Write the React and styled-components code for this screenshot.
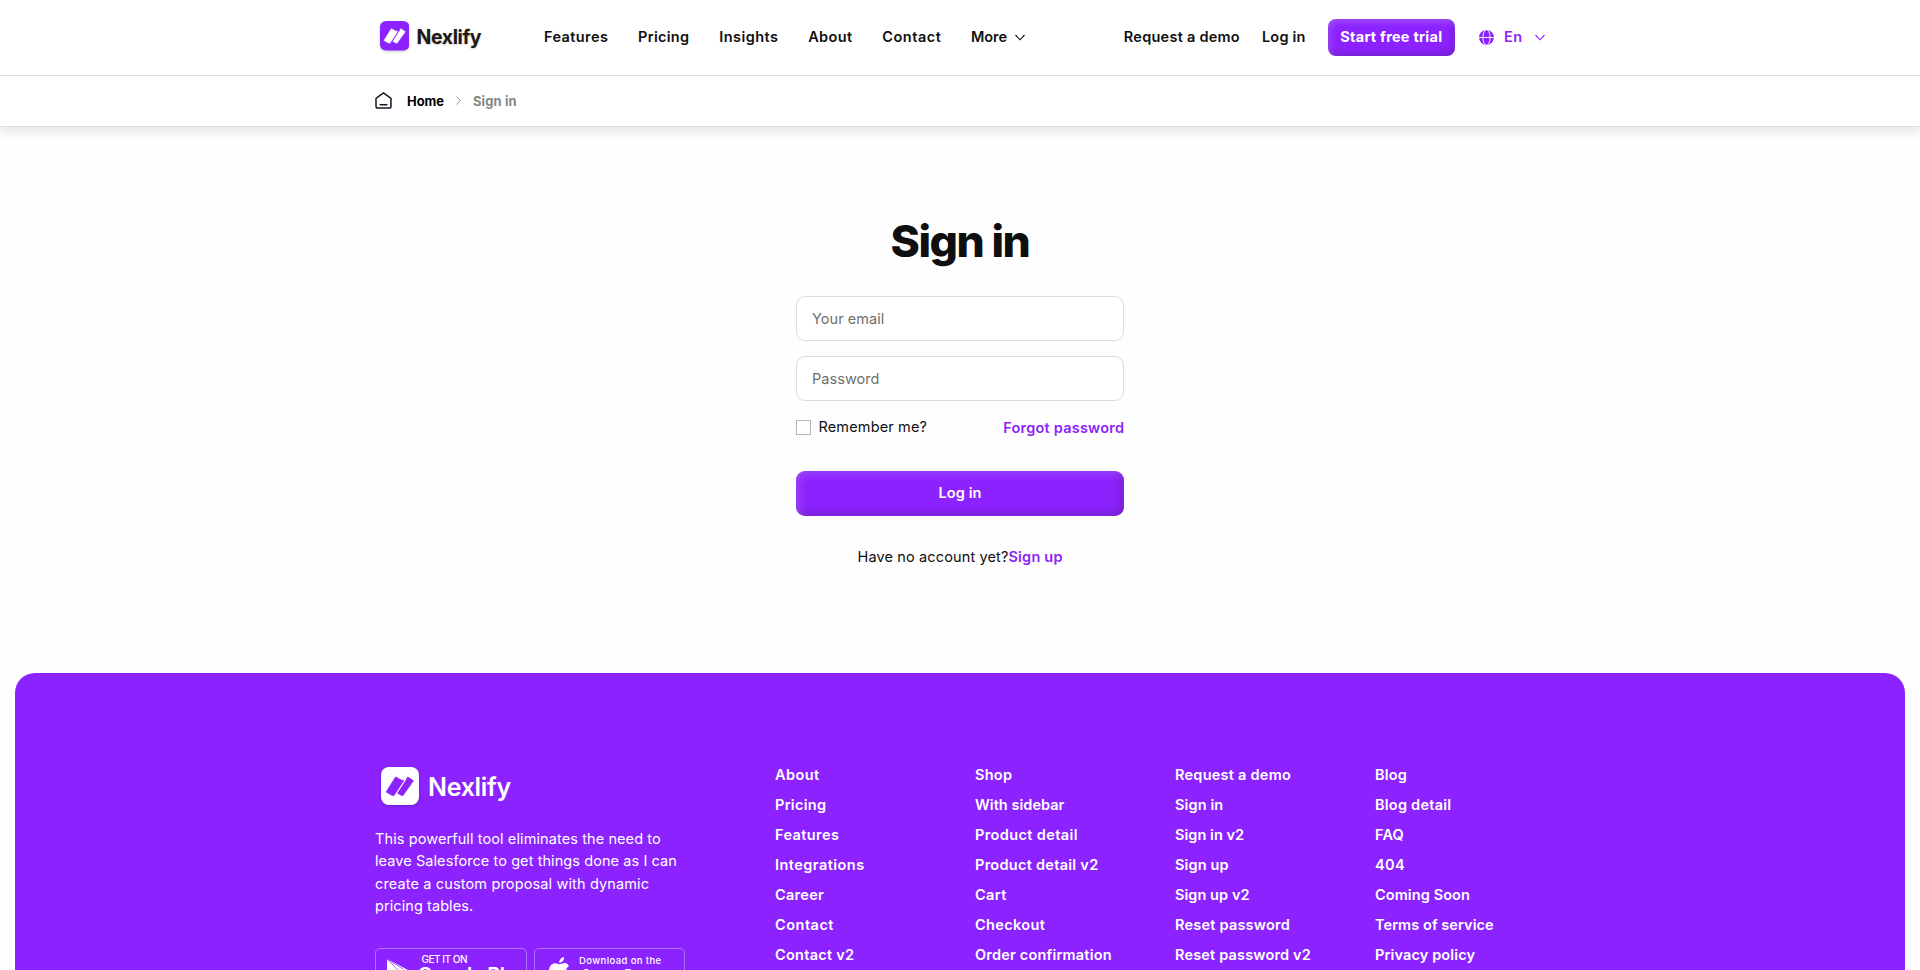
import React from 'react';
import styled, { createGlobalStyle } from 'styled-components';

const PURPLE = '#8c23ff';

const GlobalStyle = createGlobalStyle`
  *, *::before, *::after { box-sizing: border-box; }
  body { margin: 0; background: #fefefe; color: #0f0f10; font: 400 14.5px/22.5px Inter, Roboto, sans-serif; }
  a { color: inherit; text-decoration: none; }
`;

const Page = styled.div`
  display: flex;
  flex-direction: column;
  height: 970px;
  overflow: hidden;
`;

const Header = styled.header`
  background: #fff;
  border-bottom: 1px solid #dedede;
  box-shadow: 0 5px 10px rgba(0, 0, 0, 0.1);
`;

const Container = styled.div`
  display: flex;
  align-items: center;
  width: 1170px;
  margin: 0 auto;
`;

const TopBar = styled.div`
  border-bottom: 1px solid #dedede;
  ${Container} { height: 75px; }
`;

const Brand = styled.a`
  display: flex;
  align-items: center;
  gap: ${p => (p.$large ? 9 : 7.5)}px;
  width: ${p => (p.$large ? 'auto' : '169px')};
  padding: ${p => (p.$large ? '1px 0 0 6px' : '0 0 3px 4.5px')};
  svg { display: block; filter: drop-shadow(0 1px 1.5px rgba(0, 0, 0, 0.22)); }
`;

const Wordmark = styled.span`
  color: ${p => (p.$large ? '#fff' : '#1d1914')};
  font-size: ${p => (p.$large ? 25 : 19.5)}px;
  font-weight: ${p => (p.$large ? 640 : 670)};
  line-height: 30px;
  letter-spacing: ${p => (p.$large ? -0.3 : -0.4)}px;
  padding-top: ${p => (p.$large ? 1 : 1)}px;
  text-shadow: ${p => (p.$large ? 'none' : '0 1px 2px rgba(0, 0, 0, 0.2)')};
`;

const Nav = styled.nav`
  display: flex;
  align-items: center;
  gap: ${p => p.$gap}px;
  margin-left: ${p => (p.$end ? 'auto' : 0)};
  padding-bottom: 1px;
`;

const Text = styled.span`
  letter-spacing: ${p => p.$track || 0}px;
  margin-right: ${p => -(p.$track || 0)}px;
  white-space: nowrap;
`;

const NavLink = styled.a`
  display: flex;
  align-items: center;
  gap: 8px;
  font-weight: 560;
`;

const TrialButton = styled.a`
  display: flex;
  align-items: center;
  justify-content: center;
  width: 127px;
  height: 37px;
  border-radius: 8px;
  background: ${PURPLE};
  color: #fff;
  font-weight: 680;
  box-shadow: inset 2px 3px 6px rgba(255, 255, 255, 0.2), inset -2px -3px 7px rgba(0, 0, 0, 0.2);
`;

const Language = styled.a`
  display: flex;
  align-items: center;
  width: 90px;
  margin-left: -22px;
  padding-left: 24px;
  color: ${PURPLE};
  font-weight: 560;
  ${Text} { margin-left: 10px; margin-right: 12px; }
`;

const Breadcrumb = styled.div`
  display: flex;
  align-items: center;
  height: 50px;
  width: 1170px;
  margin: 0 auto;
  padding-bottom: 1px;
  font-size: 12.9px;
  line-height: 20px;
  font-weight: 680;
  color: #000;
  > svg:nth-of-type(1) { margin-right: 15px; }
  > svg:nth-of-type(2) { margin: 0 12px 0 12px; }
  > a, > span { padding-top: 2px; }
`;

const Current = styled.span`
  color: #858585;
`;

const Main = styled.main`
  display: flex;
  flex-direction: column;
  align-items: center;
  height: 546px;
  flex: none;
  padding-top: 84px;
`;

const Title = styled.h1`
  margin: 0 0 25px;
  font-size: 44.5px;
  line-height: 60px;
  font-weight: 800;
  letter-spacing: -1.5px;
`;

const Form = styled.form`
  display: flex;
  flex-direction: column;
  gap: 15px;
  width: 328px;
`;

const Input = styled.input`
  height: 45px;
  padding: 0 15px;
  border: 1px solid #dcdcdc;
  border-radius: 9px;
  background: #fff;
  font: inherit;
  letter-spacing: 0.05px;
  &::placeholder { color: #6f6f6f; opacity: 1; }
`;

const OptionRow = styled.div`
  display: flex;
  align-items: center;
  justify-content: space-between;
  height: 22px;
`;

const Remember = styled.label`
  display: flex;
  align-items: center;
  gap: 7.5px;
`;

const Checkbox = styled.input`
  appearance: none;
  width: 15px;
  height: 15px;
  margin: 0;
  border: 1px solid #b6b6b6;
  background: #fff;
`;

const AccentLink = styled.a`
  color: ${PURPLE};
  font-weight: 560;
  ${OptionRow} & { padding-top: 2px; }
`;

const SubmitButton = styled.button`
  height: 45px;
  margin-top: 18px;
  border: 0;
  border-radius: 9px;
  background: ${PURPLE};
  color: #fff;
  font: inherit;
  font-weight: 620;
  box-shadow: inset 3px 3px 8px rgba(255, 255, 255, 0.17), inset -3px -3px 8px rgba(0, 0, 0, 0.2);
`;

const SignupLine = styled.p`
  display: flex;
  justify-content: center;
  margin: 30px 0 0;
`;

const Footer = styled.footer`
  display: flex;
  justify-content: center;
  flex: none;
  height: 640px;
  margin: 0 15px;
  padding-top: 87px;
  border-radius: 20px;
  background: ${PURPLE};
  color: #fff;
`;

const FooterInner = styled.div`
  display: grid;
  grid-template-columns: 400px repeat(3, 200px) 170px;
  align-items: start;
`;

const About = styled.div`
  padding-top: 6px;
`;

const Blurb = styled.p`
  display: flex;
  flex-direction: column;
  margin: 22.5px 0 30.5px;
  font-weight: 430;
`;

const Badges = styled.div`
  display: flex;
  gap: 7px;
`;

const Badge = styled.a`
  display: flex;
  gap: ${p => p.$gap}px;
  width: ${p => p.$width}px;
  height: 46px;
  padding: ${p => p.$pad};
  border: 1px solid rgba(255, 255, 255, 0.35);
  border-radius: 5px;
`;

const BadgeText = styled.span`
  display: flex;
  flex-direction: column;
  margin-top: ${p => p.$shift}px;
`;

const BadgeSmall = styled.span`
  padding-left: ${p => p.$indent || 0}px;
  font-size: ${p => p.$size}px;
  line-height: 12px;
  font-weight: ${p => p.$weight};
  letter-spacing: ${p => p.$track}px;
  white-space: nowrap;
`;

const BadgeLarge = styled.span`
  font-size: 20px;
  line-height: 20px;
  font-weight: 600;
  letter-spacing: -0.6px;
  white-space: nowrap;
`;

const LinkColumn = styled.ul`
  display: flex;
  flex-direction: column;
  margin: 0;
  padding: 0;
  list-style: none;
  font-weight: 600;
  line-height: 30px;
`;

const nav = [['Features', 0.4], ['Pricing', 0.28], ['Insights', 0.45], ['About', 0.38], ['Contact', 0.52]];

const blurb = [
  ['This powerfull tool eliminates the need to', 0.1],
  ['leave Salesforce to get things done as I can', 0.08],
  ['create a custom proposal with dynamic', 0.14],
  ['pricing tables.', 0.08],
];

const columns = [
  [['About', 0.4], ['Pricing', 0.3], ['Features', 0.4], ['Integrations', 0.46], ['Career', 0.3], ['Contact', 0.5], ['Contact v2', 0.27]],
  [['Shop', 0.25], ['With sidebar', 0.04], ['Product detail', 0.38], ['Product detail v2', 0.28], ['Cart', 0.4], ['Checkout', 0.36], ['Order confirmation', 0.2]],
  [['Request a demo', 0.25], ['Sign in', 0.12], ['Sign in v2', 0.05], ['Sign up', 0.12], ['Sign up v2', 0.06], ['Reset password', 0.22], ['Reset password v2', 0.17]],
  [['Blog', 0.2], ['Blog detail', 0.24], ['FAQ', 0.2], ['404', 0.45], ['Coming Soon', 0.1], ['Terms of service', 0.07], ['Privacy policy', 0.13]],
];

const Logo = ({ size, tile, mark }) => (
  <svg width={size} height={size} viewBox="0 0 38 38">
    <rect width="38" height="38" rx="8" fill={tile} />
    <g fill={mark} stroke={mark} strokeWidth="0.8" strokeLinejoin="round">
      <path d="M5.2 25 14.6 9.9 20.6 13.2 23 13.4 13 28.4H11.2Z" />
      <path d="M16.4 26 26.8 10 32.4 13.8 22 28.4H20.6Z" />
    </g>
    <path d="M25 11.8 14.6 27.8" stroke={tile} strokeWidth="1" />
  </svg>
);

const Chevron = () => (
  <svg width="10" height="7" viewBox="0 0 10 7" fill="none" stroke="currentColor" strokeWidth="1.1">
    <path d="M.5 1 5 5.8 9.5 1" />
  </svg>
);

const Globe = () => (
  <svg width="15" height="15" viewBox="0 0 15 15">
    <circle cx="7.5" cy="7.5" r="7.5" fill="currentColor" />
    <g fill="none" stroke="#fff">
      <path d="M0 7.5H15" strokeWidth="0.9" />
      <ellipse cx="7.5" cy="7.5" rx="3.6" ry="7.8" strokeWidth="0.9" />
    </g>
  </svg>
);

const Home = () => (
  <svg width="17" height="17" viewBox="0 0 17 17" fill="none" stroke="#141a26" strokeWidth="1.5" strokeLinejoin="round" strokeLinecap="round">
    <path d="M1 6.4 8.5.9 16 6.4V14.2Q16 16 14.2 16H2.8Q1 16 1 14.2Z" />
    <path d="M5.2 12.8H11.8" />
  </svg>
);

const Separator = () => (
  <svg width="5" height="9" viewBox="0 0 5 9" fill="none" stroke="#999" strokeWidth="1">
    <path d="M.5.5 4.4 4.5.5 8.5" />
  </svg>
);

const PlayIcon = () => (
  <svg width="27" height="29" viewBox="0 0 27 29">
    <path d="M0 0 27 14.5 0 29Z" fill="#fff" />
    <path d="M0 0 14 14.5 0 29M0 0 19 12" stroke={PURPLE} strokeWidth="0.8" fill="none" />
  </svg>
);

const AppleIcon = () => (
  <svg width="21" height="26" viewBox="0 0 21 26" fill="#fff">
    <path d="M15 0C15.3 3 12.8 5.9 10.2 5.8 10 3 12.4.4 15 0Z" />
    <path d="M20 9C16 11.3 16.5 16.7 20.6 18.3 19.4 21.6 17.2 25.2 14.7 25.2 13.4 25.2 12.6 24.4 11 24.4S8.5 25.2 7.3 25.2C3.7 25.2 0 18.8 0 13.8 0 8.9 3.2 6.2 6.3 6.2 8.2 6.2 9.6 7.3 10.7 7.3S13.6 6 15.7 6C17.4 6 19 7.1 20 9Z" />
  </svg>
);

export default function App() {
  return (
    <Page>
      <GlobalStyle />
      <Header>
        <TopBar>
          <Container>
            <Brand href="#">
              <Logo size={29.5} tile={PURPLE} mark="#fff" />
              <Wordmark>Nexlify</Wordmark>
            </Brand>
            <Nav $gap={30.2}>
              {nav.map(([label, track]) => (
                <NavLink href="#" key={label}><Text $track={track}>{label}</Text></NavLink>
              ))}
              <NavLink href="#"><Text $track={-0.1}>More</Text><Chevron /></NavLink>
            </Nav>
            <Nav $gap={22.3} $end>
              <NavLink href="#"><Text $track={0.25}>Request a demo</Text></NavLink>
              <NavLink href="#"><Text $track={0.2}>Log in</Text></NavLink>
              <TrialButton href="#"><Text $track={0.26}>Start free trial</Text></TrialButton>
              <Language href="#"><Globe /><Text $track={0.5}>En</Text><Chevron /></Language>
            </Nav>
          </Container>
        </TopBar>
        <Breadcrumb>
          <Home />
          <Text as="a" href="#">Home</Text>
          <Separator />
          <Current><Text $track={0.15}>Sign in</Text></Current>
        </Breadcrumb>
      </Header>

      <Main>
        <Title>Sign in</Title>
        <Form>
          <Input placeholder="Your email" />
          <Input placeholder="Password" />
          <OptionRow>
            <Remember><Checkbox type="checkbox" /><Text $track={0.14}>Remember me?</Text></Remember>
            <AccentLink href="#"><Text $track={0.22}>Forgot password</Text></AccentLink>
          </OptionRow>
          <SubmitButton type="button"><Text $track={0.1}>Log in</Text></SubmitButton>
        </Form>
        <SignupLine>
          <Text $track={0.14}>Have no account yet?</Text>
          <AccentLink href="#"><Text $track={0.22}>Sign up</Text></AccentLink>
        </SignupLine>
      </Main>

      <Footer>
        <FooterInner>
          <About>
            <Brand href="#" $large>
              <Logo size={38} tile="#fff" mark={PURPLE} />
              <Wordmark $large>Nexlify</Wordmark>
            </Brand>
            <Blurb>
              {blurb.map(([line, track]) => <Text key={line} $track={track}>{line}</Text>)}
            </Blurb>
            <Badges>
              <Badge href="#" $width={152} $gap={7} $pad="8px 0 0 11px">
                <PlayIcon />
                <BadgeText $shift={-4}>
                  <BadgeSmall $size={10} $weight={500} $track={-0.5} $indent={4}>GET IT ON</BadgeSmall>
                  <BadgeLarge>Google Play</BadgeLarge>
                </BadgeText>
              </Badge>
              <Badge href="#" $width={151} $gap={9} $pad="8px 0 0 14px">
                <AppleIcon />
                <BadgeText $shift={-2}>
                  <BadgeSmall $size={9.5} $weight={500} $track={0.4}>Download on the</BadgeSmall>
                  <BadgeLarge>App Store</BadgeLarge>
                </BadgeText>
              </Badge>
            </Badges>
          </About>
          {columns.map(links => (
            <LinkColumn key={links[0][0]}>
              {links.map(([label, track]) => (
                <li key={label}><Text as="a" href="#" $track={track}>{label}</Text></li>
              ))}
            </LinkColumn>
          ))}
        </FooterInner>
      </Footer>
    </Page>
  );
}
